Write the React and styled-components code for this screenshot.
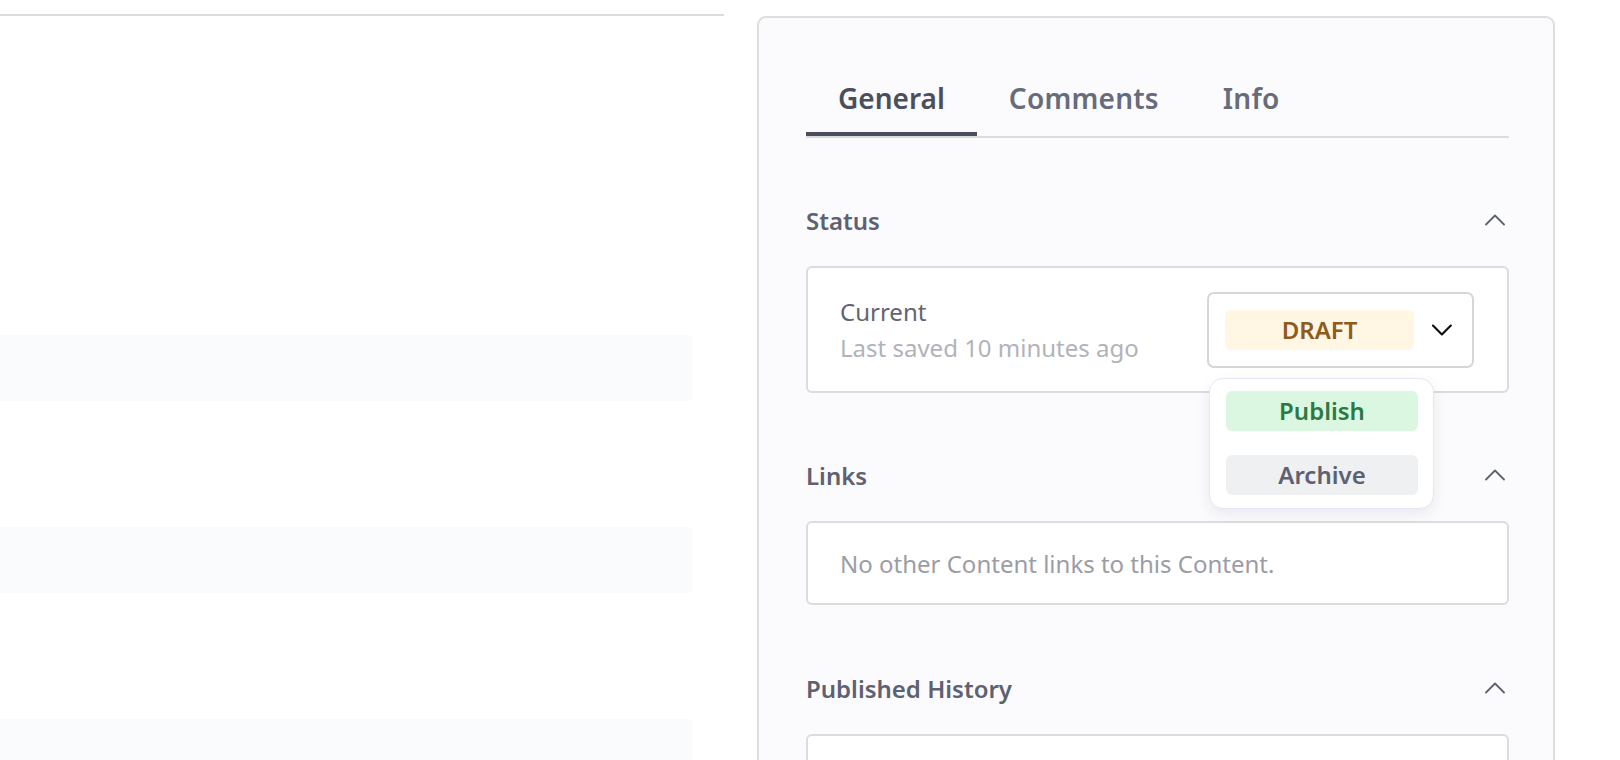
import React from 'react'
import styled, { createGlobalStyle } from 'styled-components'

const GlobalStyle = createGlobalStyle`
  html, body {
    margin: 0;
    padding: 0;
    background: #ffffff;
    font-family: "Noto Sans", "Open Sans", sans-serif;
  }
  * {
    box-sizing: border-box;
  }
`

const Page = styled.div`
  display: flex;
  align-items: flex-start;
  width: 1620px;
  height: 760px;
  padding-top: 14px;
  overflow: hidden;
`

const ListColumn = styled.div`
  width: 724px;
  flex-shrink: 0;
  border-top: 2px solid #dcdcdc;
  padding-top: 319px;
  display: flex;
  flex-direction: column;
  gap: 126px;
`

const ListRow = styled.div`
  width: 692px;
  height: 66px;
  background: #fafbfd;
`

const Card = styled.aside`
  margin-left: 33px;
  margin-top: 2px;
  width: 798px;
  height: 800px;
  flex-shrink: 0;
  border: 2px solid #dedede;
  border-radius: 9px;
  background: #fbfbfd;
  padding: 46px 44px 0 47px;
`

const TabList = styled.div`
  display: flex;
  border-bottom: 2px solid #dcdcde;
`

const Tab = styled.button`
  height: 72px;
  padding: 0 32px;
  border: none;
  border-bottom: 4px solid ${p => (p.active ? '#4b4e5c' : 'transparent')};
  background: none;
  font-family: inherit;
  font-size: 28px;
  font-weight: 600;
  letter-spacing: ${p => (p.active ? '0' : '0.2px')};
  color: ${p => (p.active ? '#4b4e5c' : '#686b79')};
  cursor: pointer;
`

const Section = styled.section`
  margin-top: ${p => p.gap || 64}px;
`

const SectionHeader = styled.div`
  display: flex;
  align-items: center;
  justify-content: space-between;
  height: 40px;
  margin-bottom: 26px;
  padding-right: 4px;
`

const SectionTitle = styled.h3`
  margin: 0;
  font-size: 24px;
  font-weight: 600;
  color: #5e6170;
`

const Box = styled.div`
  position: relative;
  display: flex;
  align-items: center;
  justify-content: space-between;
  height: ${p => p.height}px;
  padding: 0 33px 0 32px;
  background: #ffffff;
  border: 2px solid #dcdcde;
  border-radius: 6px;
`

const StatusText = styled.div`
  display: flex;
  flex-direction: column;
  font-size: 24px;
  line-height: 36px;
`

const Label = styled.span`
  color: #62656f;
`

const Muted = styled.span`
  color: ${p => p.color || '#b1b3b9'};
  font-size: 24px;
`

const SelectWrap = styled.div`
  position: relative;
`

const Select = styled.div`
  display: flex;
  align-items: center;
  gap: 18px;
  width: 267px;
  height: 76px;
  padding: 0 20px 0 16px;
  border: 2px solid #d6d6da;
  border-radius: 7px;
  background: #ffffff;
`

const Pill = styled.span`
  display: flex;
  align-items: center;
  justify-content: center;
  width: 191px;
  height: 40px;
  border-radius: 6px;
  font-size: 24px;
  font-weight: 600;
  background: ${p => p.bg};
  color: ${p => p.fg};
`

const Menu = styled.div`
  position: absolute;
  top: calc(100% + 10px);
  left: 2px;
  z-index: 2;
  display: flex;
  flex-direction: column;
  gap: 24px;
  width: 225px;
  padding: 12px 16px 13px;
  background: #ffffff;
  border: 1px solid #e6e6f6;
  border-radius: 14px;
  box-shadow: 0 5px 14px rgba(40, 40, 80, 0.08);
`

const MenuItem = styled(Pill)`
  width: 192px;
`

const Chevron = ({ up, color = '#5e6170', width = 1.8 }) => (
  <svg width="20" height="12" viewBox="0 0 20 12" fill="none">
    <polyline
      points={up ? '1,10.5 10,1.5 19,10.5' : '1,1.5 10,10.5 19,1.5'}
      stroke={color}
      strokeWidth={width}
      strokeLinecap="round"
      strokeLinejoin="round"
    />
  </svg>
)

export default function App() {
  return (
    <>
      <GlobalStyle />
      <Page>
        <ListColumn>
          <ListRow />
          <ListRow />
          <ListRow />
        </ListColumn>

        <Card>
          <TabList>
            <Tab active>General</Tab>
            <Tab>Comments</Tab>
            <Tab>Info</Tab>
          </TabList>

          <Section gap={62}>
            <SectionHeader>
              <SectionTitle>Status</SectionTitle>
              <Chevron up />
            </SectionHeader>
            <Box height={127}>
              <StatusText>
                <Label>Current</Label>
                <Muted>Last saved 10 minutes ago</Muted>
              </StatusText>
              <SelectWrap>
                <Select>
                  <Pill bg="#fff6e4" fg="#8f5a1b">DRAFT</Pill>
                  <Chevron color="#111" width={2.2} />
                </Select>
                <Menu>
                  <MenuItem bg="#dcf7e1" fg="#2b7a41">Publish</MenuItem>
                  <MenuItem bg="#eff0f2" fg="#5e6170">Archive</MenuItem>
                </Menu>
              </SelectWrap>
            </Box>
          </Section>

          <Section gap={62}>
            <SectionHeader>
              <SectionTitle>Links</SectionTitle>
              <Chevron up />
            </SectionHeader>
            <Box height={84}>
              <Muted color="#9b9da4">No other Content links to this Content.</Muted>
            </Box>
          </Section>

          <Section gap={63}>
            <SectionHeader>
              <SectionTitle>Published History</SectionTitle>
              <Chevron up />
            </SectionHeader>
            <Box height={120} />
          </Section>
        </Card>
      </Page>
    </>
  )
}
